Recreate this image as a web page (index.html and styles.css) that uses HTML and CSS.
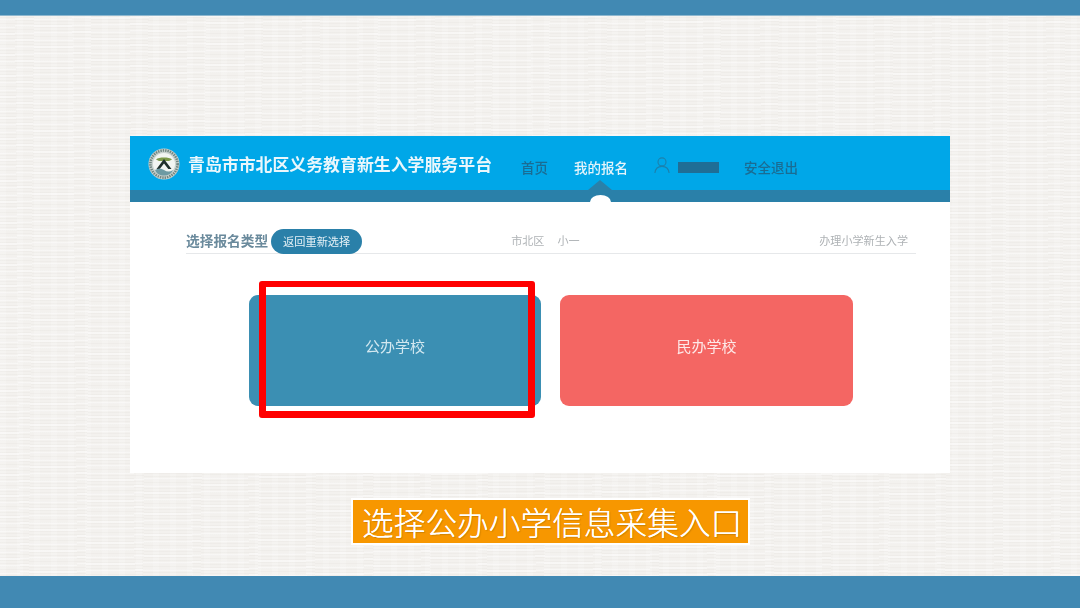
FILE: index.html
```html
<!DOCTYPE html>
<html lang="zh-CN">
<head>
<meta charset="utf-8">
<title>选择公办小学信息采集入口</title>
<link rel="stylesheet" href="styles.css">
</head>
<body>
<div class="slide">
  <div class="bar-top"></div>
  <main class="stage">
    <section class="panel">
      <header class="site-head">
        <svg class="logo" viewBox="0 0 32 32" aria-hidden="true">
          <circle cx="16" cy="16" r="15.5" fill="#c9d2cf"/>
          <circle cx="16" cy="16" r="13.6" fill="none" stroke="#6f8580" stroke-width="2.6" stroke-dasharray="1.4 1"/>
          <circle cx="16" cy="16" r="11" fill="#f2f5f2"/>
          <path d="M8 11.500c3-2.600 13-2.600 16 0l-3 1.600h-10z" fill="#7d9a4a"/>
          <path d="M16 11 8.500 21h3.200L16 15.500 20.300 21h3.200z" fill="#1f2f2c"/>
          <path d="M7 22c3-2 6-2 9 0s6 2 9 0c-1.500 3.800-5 5.500-9 5.500S8.500 25.800 7 22z" fill="#6d9aa3"/>
        </svg>
        <h1 class="site-title">青岛市市北区义务教育新生入学服务平台</h1>
        <nav class="site-nav">
          <a class="nav-link">首页</a>
          <a class="nav-link is-active">我的报名</a>
          <span class="user">
            <svg class="user-icon" viewBox="0 0 18 18" aria-hidden="true">
              <circle cx="9" cy="5.500" r="4.500"/>
              <path d="M1 18c.5-4.500 3.500-7.500 8-7.500s7.500 3 8 7.500"/>
            </svg>
            <span class="user-name"></span>
          </span>
          <a class="nav-link">安全退出</a>
        </nav>
      </header>
      <div class="head-strip"><span class="strip-notch"></span></div>
      <div class="panel-body">
        <div class="type-row">
          <h2 class="type-title">选择报名类型</h2>
          <button class="back-btn">返回重新选择</button>
          <span class="crumb crumb-area">市北区</span>
          <span class="crumb crumb-level">小一</span>
          <span class="crumb crumb-action">办理小学新生入学</span>
        </div>
        <div class="choices">
          <div class="choice choice-public"><span class="choice-label">公办学校</span><span class="highlight"></span></div>
          <div class="choice choice-private"><span class="choice-label">民办学校</span></div>
        </div>
      </div>
    </section>
    <p class="caption"><span>选择公办小学信息采集入口</span></p>
  </main>
  <div class="bar-bottom"></div>
</div>
</body>
</html>
```

FILE: styles.css
```css
* { box-sizing: border-box; }
html, body { margin: 0; padding: 0; }
body { width: 1080px; height: 608px; overflow: hidden; font-family: "Noto Sans CJK SC", "Liberation Sans", sans-serif; }

.slide { display: flex; flex-direction: column; width: 1080px; height: 608px; }
.bar-top { height: 16px; background: #4189b3; border-bottom: 1px solid #8fb8cf; }
.bar-bottom { height: 32px; background: #4189b3; }
.stage {
  flex: 1;
  padding: 120px 0 0 130px;
  background-color: #f3f1ee;
  background-image:
    repeating-linear-gradient(1deg, rgba(120,110,95,.035) 0 1px, transparent 1px 3px),
    repeating-linear-gradient(-1deg, rgba(255,255,255,.4) 0 2px, transparent 2px 7px),
    repeating-linear-gradient(90deg, rgba(255,255,255,.18) 0 6px, transparent 6px 17px);
}

.panel { width: 820px; height: 337px; background: #fff; }
.site-head { display: flex; align-items: center; height: 54px; padding-left: 18px; background: #00a7e8; }
.logo { width: 32px; height: 32px; margin-top: 2px; flex: none; filter: blur(.4px); }
.site-title { margin: 2px 0 0 8px; font-size: 16.900px; line-height: 28px; font-weight: 700; color: #eaf7fc; white-space: nowrap; filter: blur(.4px); }
.site-nav { display: flex; align-items: center; margin: 8px 0 0 29px; font-size: 13.500px; font-weight: 500; color: #1a6c93; filter: blur(.4px); }
.nav-link { margin-right: 26px; white-space: nowrap; }
.nav-link.is-active { color: #e4f4fb; }
.user { display: flex; align-items: center; margin-right: 25px; }
.user-icon { width: 16px; height: 18px; margin-top: -5px; fill: none; stroke: #1b81ad; stroke-width: 1.300; }
.user-name { width: 41px; height: 11px; margin-left: 8px; background: #1f6e96; }

.head-strip { position: relative; height: 12px; background: #2a80a9; }
.strip-notch { position: absolute; left: 460px; top: 5px; width: 21px; height: 7px; background: #fff; border-radius: 50% 50% 0 0 / 100% 100% 0 0; }
.strip-notch::before { content: ""; position: absolute; left: -2px; top: -15px; border: 12px solid transparent; border-top: 0; border-bottom: 10px solid #2a80a9; }

.panel-body { padding: 27px 34px 0 56px; }
.type-row { position: relative; display: flex; align-items: center; height: 25px; border-bottom: 1px solid #e6e8ea; }
.type-title { margin: 0 0 3px; font-size: 13.700px; font-weight: 700; color: #6a8a9c; white-space: nowrap; filter: blur(.4px); }
.back-btn { width: 91px; height: 25px; margin: 0 0 0 3px; padding: 0; border: 0; border-radius: 13px; background: #2a80a9; color: #e6f1f6; font-family: inherit; font-size: 11.200px; filter: blur(.2px); }
.crumb { margin-bottom: 2px; font-size: 11.100px; color: #aeb2b5; white-space: nowrap; filter: blur(.3px); }
.crumb-area { margin-left: 149px; }
.crumb-level { margin-left: 13px; }
.crumb-action { margin-left: auto; margin-right: 8px; }

.choices { display: flex; gap: 19px; margin: 41px 0 0 63px; }
.choice { position: relative; display: flex; align-items: center; justify-content: center; height: 111px; padding-bottom: 10px; border-radius: 9px; font-size: 15px; }
.choice-label { filter: blur(.3px); }
.choice-public { width: 292px; background: #3b8fb3; color: #d3e8f0; }
.choice-private { width: 293px; background: #f46663; color: #fde9e8; }
.highlight { position: absolute; left: 10px; top: -14px; width: 276px; height: 137px; border: solid #ff0000; border-width: 6px 7px 7px; border-radius: 3px; }

.caption { display: block; width: 399px; height: 47px; margin: 25px 0 0 221px; border: 2px solid #fff; background: #f79700; }
.caption span { display: block; padding-left: 9px; font-size: 31.700px; font-weight: 300; line-height: 43px; color: #fff; white-space: nowrap; text-shadow: 0 0 .6px #fff, 1px 1px 1px rgba(120,80,0,.3); }
```
